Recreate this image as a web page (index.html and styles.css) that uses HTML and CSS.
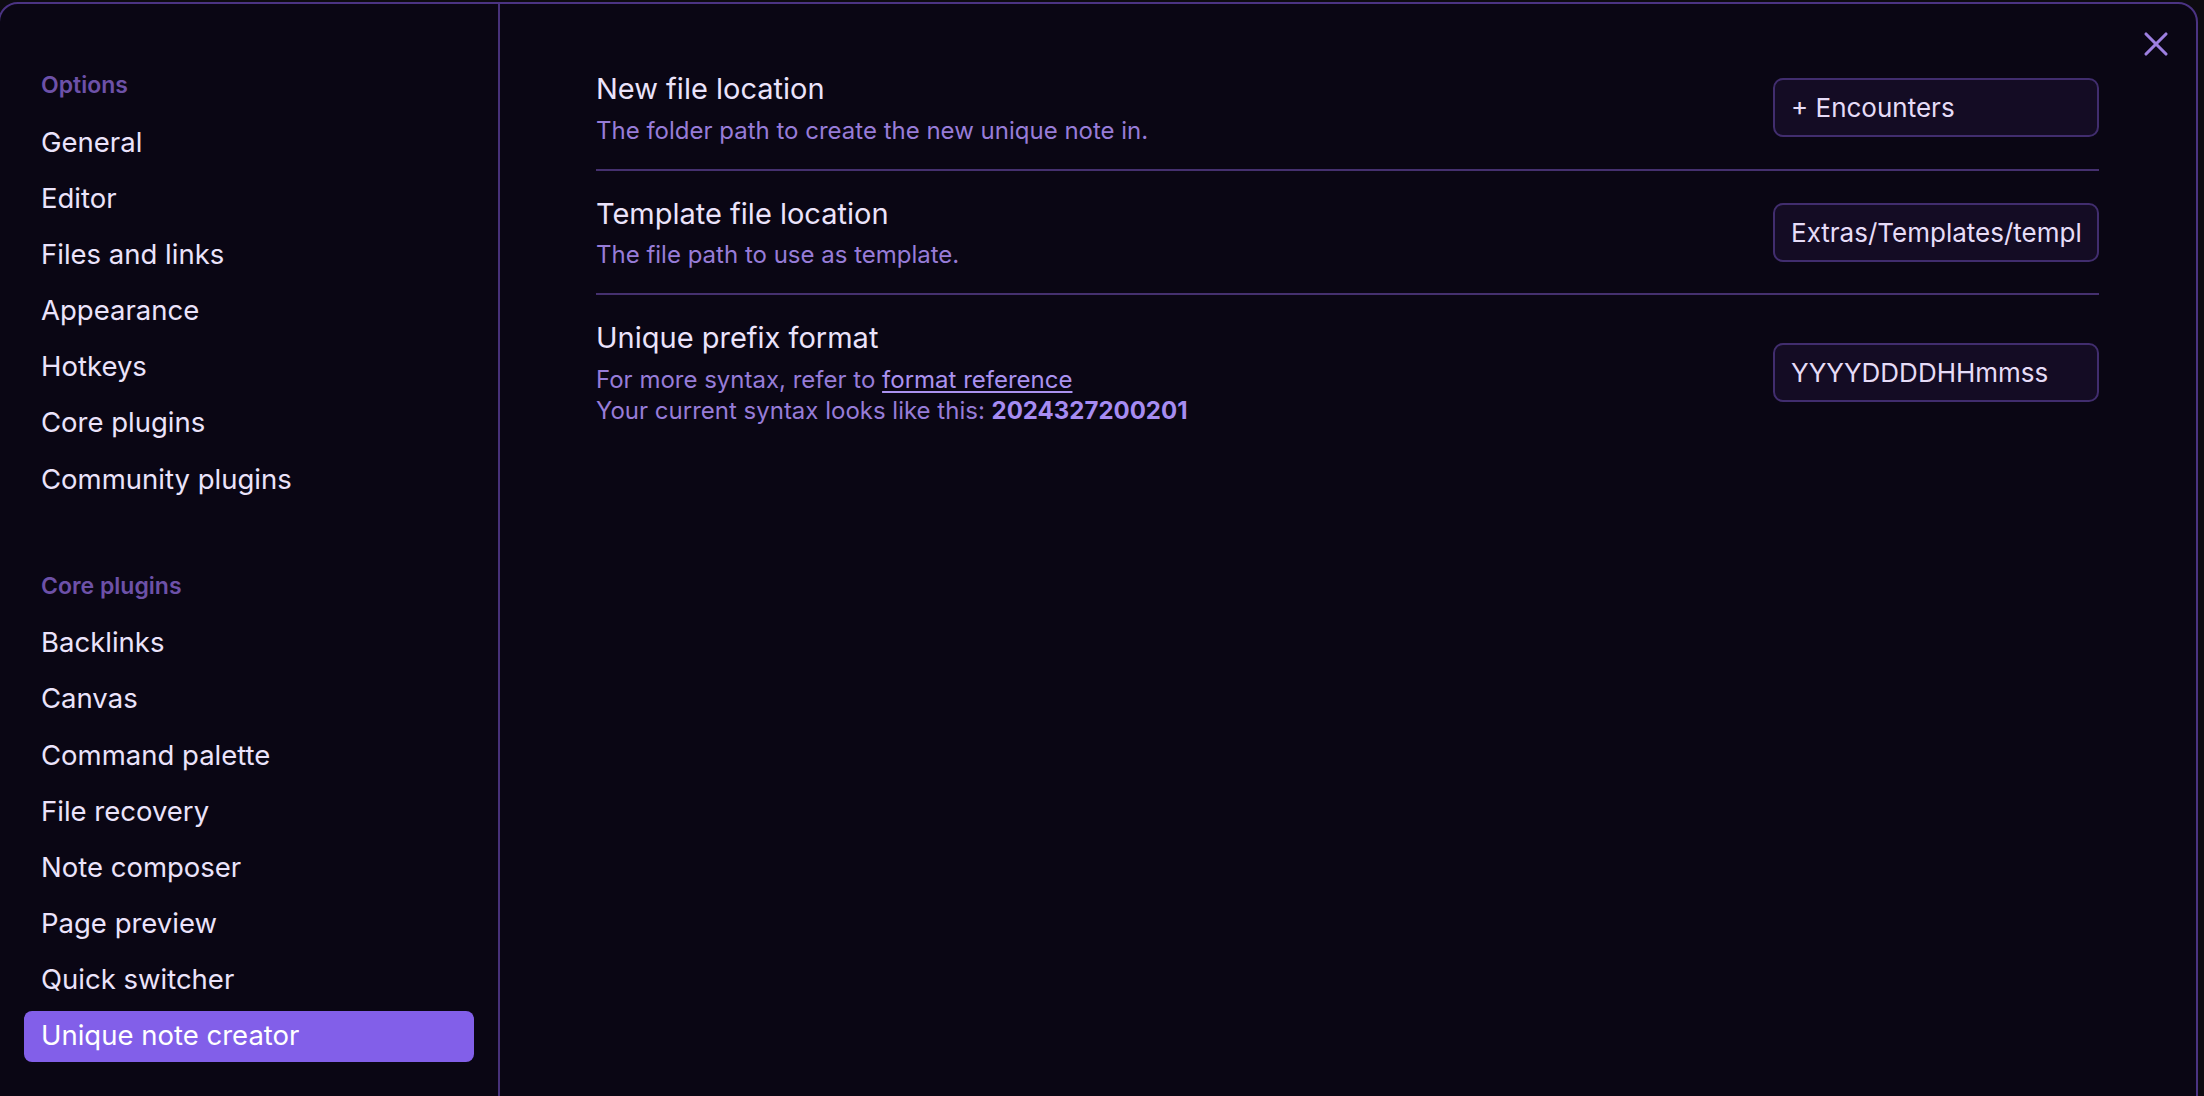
FILE: index.html
```html
<!DOCTYPE html>
<html lang="en">
<head>
<meta charset="utf-8">
<title>Settings — Unique note creator</title>
<link rel="stylesheet" href="styles.css">
</head>
<body>
<div class="modal">
  <button class="modal-close" aria-label="Close">
    <svg viewBox="0 0 24 24" width="40" height="40" fill="none" stroke="currentColor" stroke-width="1.9" stroke-linecap="round" stroke-linejoin="round"><path d="M18 6 6 18"/><path d="m6 6 12 12"/></svg>
  </button>
  <nav class="sidebar">
    <div class="nav-group">
      <div class="nav-header">Options</div>
      <div class="nav-item">General</div>
      <div class="nav-item">Editor</div>
      <div class="nav-item">Files and links</div>
      <div class="nav-item">Appearance</div>
      <div class="nav-item">Hotkeys</div>
      <div class="nav-item">Core plugins</div>
      <div class="nav-item">Community plugins</div>
    </div>
    <div class="nav-group">
      <div class="nav-header">Core plugins</div>
      <div class="nav-item">Backlinks</div>
      <div class="nav-item">Canvas</div>
      <div class="nav-item">Command palette</div>
      <div class="nav-item">File recovery</div>
      <div class="nav-item">Note composer</div>
      <div class="nav-item">Page preview</div>
      <div class="nav-item">Quick switcher</div>
      <div class="nav-item is-active">Unique note creator</div>
    </div>
  </nav>
  <main class="content">
    <div class="setting">
      <div class="setting-info">
        <div class="setting-name">New file location</div>
        <div class="setting-desc">The folder path to create the new unique note in.</div>
      </div>
      <div class="setting-control"><input class="text-input" type="text" value="+ Encounters"></div>
    </div>
    <div class="setting">
      <div class="setting-info">
        <div class="setting-name">Template file location</div>
        <div class="setting-desc">The file path to use as template.</div>
      </div>
      <div class="setting-control"><input class="text-input" type="text" value="Extras/Templates/template.md"></div>
    </div>
    <div class="setting">
      <div class="setting-info">
        <div class="setting-name">Unique prefix format</div>
        <div class="setting-desc">For more syntax, refer to <a class="link" href="#">format reference</a><br>Your current syntax looks like this: <b class="sample">2024327200201</b></div>
      </div>
      <div class="setting-control"><input class="text-input" type="text" value="YYYYDDDDHHmmss"></div>
    </div>
  </main>
</div>
</body>
</html>
```

FILE: styles.css
```css
html, body {
  margin: 0;
  padding: 0;
  height: 100%;
  overflow: hidden;
  background: #0d0b11;
  font-family: "Inter", "Noto Sans", sans-serif;
}

.modal {
  position: relative;
  box-sizing: border-box;
  width: 2200px;
  height: 1110px;
  margin: 2px 0 0 -2px;
  display: flex;
  background: #0a0614;
  border: 2px solid #4b3383;
  border-radius: 20px 20px 0 0;
}

.modal-close {
  position: absolute;
  top: 20px;
  right: 20px;
  width: 40px;
  height: 40px;
  padding: 0;
  border: 0;
  background: transparent;
  color: #9d7fe0;
  display: flex;
  align-items: center;
  justify-content: center;
}

.sidebar {
  box-sizing: border-box;
  width: 500px;
  flex: none;
  padding: 66px 24px 0 24px;
  border-right: 2px solid #47317a;
}

.nav-group + .nav-group {
  margin-top: 65px;
}

.nav-header {
  font-size: 23px;
  line-height: 30px;
  font-weight: 600;
  color: #6d51a8;
  padding-left: 17px;
  margin-bottom: 17px;
}

.nav-item {
  font-size: 27.5px;
  line-height: 41px;
  padding: 4.5px 17px 6px;
  margin-bottom: 4.7px;
  border-radius: 8px;
  color: #ebe3fb;
}

.nav-item.is-active {
  background: #825fe9;
  color: #ffffff;
}

.content {
  flex: 1;
  min-width: 0;
  padding: 42px 97px 0 96px;
}

.setting {
  display: flex;
  align-items: center;
  padding: 24px 0 23px;
}

.setting + .setting {
  border-top: 2px solid #45306f;
}

.setting-info {
  flex: 1;
  min-width: 0;
}

.setting-name {
  font-size: 29px;
  line-height: 37.7px;
  color: #ebe3fb;
}

.setting-desc {
  margin-top: 7px;
  font-size: 24px;
  line-height: 31px;
  color: #977cd8;
}

.link {
  color: #ab92f0;
  text-decoration: underline;
  text-underline-offset: 3px;
}

.sample {
  color: #a68cf2;
  font-weight: 700;
}

.setting-control {
  flex: none;
  margin-left: 24px;
}

.text-input {
  box-sizing: border-box;
  width: 326px;
  height: 59px;
  padding: 0 16px;
  border: 2px solid #412d6e;
  border-radius: 10px;
  background: #140c24;
  color: #e6dcf7;
  font-family: "Inter", "Noto Sans", sans-serif;
  font-size: 26px;
  outline: none;
}
```
